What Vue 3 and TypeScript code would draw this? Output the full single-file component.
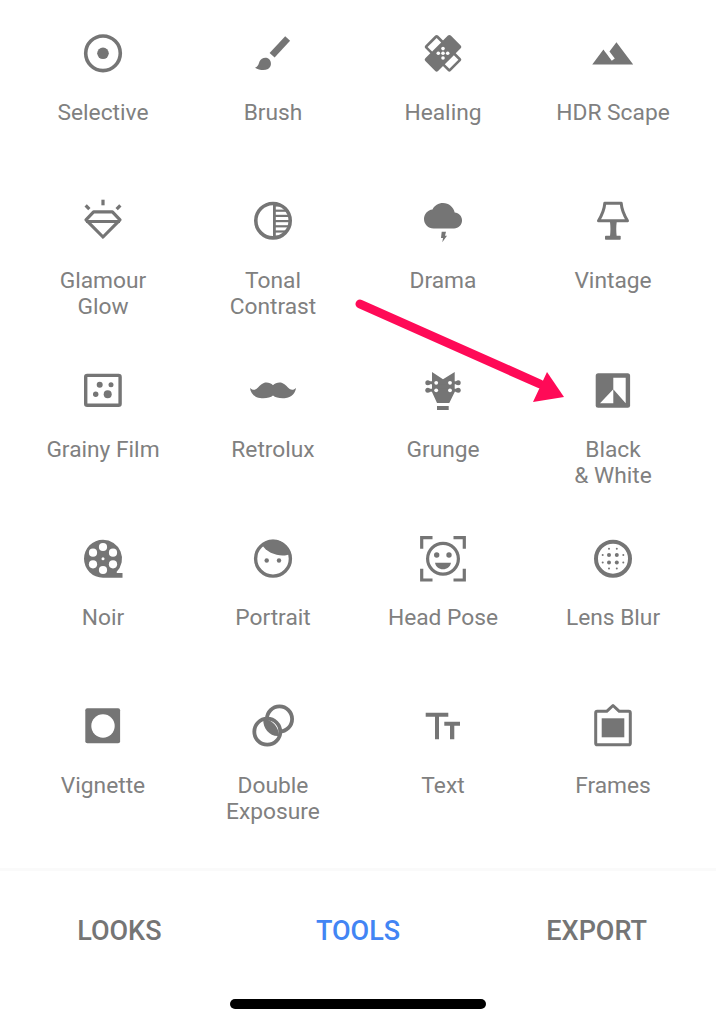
<script setup lang="ts">
// 工具面板 - Snapseed tools grid with the bottom tab bar
const tools: { id: string; label: string }[] = [
  { id: "selective", label: "Selective" },
  { id: "brush", label: "Brush" },
  { id: "healing", label: "Healing" },
  { id: "hdr", label: "HDR Scape" },
  { id: "glamour", label: "Glamour\nGlow" },
  { id: "tonal", label: "Tonal\nContrast" },
  { id: "drama", label: "Drama" },
  { id: "vintage", label: "Vintage" },
  { id: "grainy", label: "Grainy Film" },
  { id: "retrolux", label: "Retrolux" },
  { id: "grunge", label: "Grunge" },
  { id: "bw", label: "Black\n& White" },
  { id: "noir", label: "Noir" },
  { id: "portrait", label: "Portrait" },
  { id: "headpose", label: "Head Pose" },
  { id: "lensblur", label: "Lens Blur" },
  { id: "vignette", label: "Vignette" },
  { id: "double", label: "Double\nExposure" },
  { id: "text", label: "Text" },
  { id: "frames", label: "Frames" },
];

const tabs = ["LOOKS", "TOOLS", "EXPORT"];
const activeTab = "TOOLS";

const reelHoles = [
  [24, 13],
  [34, 18.7],
  [34, 30.3],
  [24, 36],
  [14, 30.3],
  [14, 18.7],
];
const blurBig = [
  [20, 21],
  [27.8, 21],
  [20, 28.6],
  [27.8, 28.6],
];
const blurSmall = [
  [20, 14.7],
  [27.8, 14.7],
  [13.7, 21],
  [34.3, 21],
  [13.7, 28.6],
  [34.3, 28.6],
  [20, 34.6],
  [27.8, 34.6],
];
const toneStripes = [9.6, 14.8, 20, 25.2, 30.4, 35.6];
</script>

<template>
  <div class="screen">
    <main class="tool-grid">
      <div v-for="tool in tools" :key="tool.id" class="tool">
        <svg class="tool-icon" viewBox="0 0 48 48" width="48" height="48">
          <template v-if="tool.id === 'selective'">
            <circle class="ring" cx="24" cy="24.3" r="17.3" stroke-width="3.6" />
            <circle cx="24" cy="24.3" r="5.8" />
          </template>
          <template v-else-if="tool.id === 'brush'">
            <path d="M36.2 7.2l4.9 4.6L25.6 28.6l-5-4.6z" />
            <path d="M6 38.7c3-.7 3.6-3.7 4.500-6.200 1.500-3.600 6.500-5 9.500-2.500 3 3 2.500 8-1 10-4 2-9 1-13-1.300z" />
          </template>
          <template v-else-if="tool.id === 'healing'">
            <g transform="rotate(45 24 24.3)">
              <rect x="6" y="15.300" width="36" height="18" rx="2" />
              <rect x="15" y="6.300" width="18" height="36" rx="2" />
              <rect class="hole" x="8.600" y="17.900" width="6.400" height="12.800" />
              <rect class="hole" x="33" y="17.900" width="6.400" height="12.800" />
            </g>
            <circle class="hole" cx="24" cy="19.600" r="1.800" />
            <circle class="hole" cx="19.300" cy="24.300" r="1.800" />
            <circle class="hole" cx="28.700" cy="24.300" r="1.800" />
            <circle class="hole" cx="24" cy="29" r="1.800" />
            <circle class="hole" cx="24" cy="24.300" r="1.800" />
          </template>
          <template v-else-if="tool.id === 'hdr'">
            <path
              transform="translate(1.4 2) scale(1.86)"
              d="M14 6l-3.75 5 2.85 3.8-1.6 1.2C9.81 13.75 7 10 7 10l-6 8h22L14 6z"
            />
          </template>
          <template v-else-if="tool.id === 'glamour'">
            <rect x="22.400" y="2.700" width="3.200" height="5.600" />
            <path d="M5.500 9.600l2.300-2.300 3.700 3.700-2.300 2.300zM42.500 9.600l-2.300-2.300-3.700 3.700 2.300 2.300z" />
            <path class="ring" stroke-width="3.200" stroke-linejoin="round" d="M14.600 14.800h18.800L41 22.800 24 40 7 22.800z" />
            <path class="ring" stroke-width="3.200" d="M7 24.500h34" />
          </template>
          <template v-else-if="tool.id === 'tonal'">
            <clipPath id="tone-clip">
              <circle cx="24" cy="23.700" r="15.400" />
            </clipPath>
            <circle class="ring" cx="24" cy="23.700" r="17.200" stroke-width="3.600" />
            <path d="M24 5.700a18 18 0 0 1 0 36z" />
            <g clip-path="url(#tone-clip)">
              <rect
                v-for="y in toneStripes"
                :key="y"
                class="hole"
                x="26.800"
                :y="y"
                width="14"
                height="3"
              />
            </g>
          </template>
          <template v-else-if="tool.id === 'drama'">
            <path
              transform="translate(5 -.3) scale(1.585)"
              d="M19.35 10.04C18.67 6.59 15.64 4 12 4 9.11 4 6.6 5.64 5.35 8.04 2.34 8.36 0 10.91 0 14c0 3.31 2.69 6 6 6h13c2.76 0 5-2.24 5-5 0-2.64-2.05-4.78-4.65-4.96z"
            />
            <path d="M22.700 34.700H27l-1 4h2l-4.700 6.600.7-4.300h-2z" />
          </template>
          <template v-else-if="tool.id === 'vintage'">
            <path class="ring" stroke-width="3" stroke-linejoin="round" d="M15.800 6.200h16.400c.5 6.500 2.500 11.500 6.300 17.500H9.500c3.800-6 5.800-11 6.300-17.500z" />
            <path d="M21 25h6.700c-.6 4.500-.6 9 0 14.500H21c.6-5.500.6-10 0-14.500z" />
            <rect x="16" y="38.800" width="15.700" height="3.900" rx=".8" />
          </template>
          <template v-else-if="tool.id === 'grainy'">
            <rect class="ring" x="6.700" y="9.400" width="34.400" height="29.800" rx="1.500" stroke-width="3.400" />
            <circle cx="20.700" cy="18.800" r="3" />
            <circle cx="32" cy="18.800" r="2.500" />
            <circle cx="16.700" cy="28.300" r="2.700" />
            <circle cx="28.700" cy="28.300" r="4" />
          </template>
          <template v-else-if="tool.id === 'retrolux'">
            <path d="M24 19.300c-2.300-2.400-6-3.300-9.200-2.300-3.400 1.100-5 4.200-7.500 6-2 1.300-4.300 1.200-6.300-1.200.3 5 4.300 9.600 10 10.300 5.200.6 10.500-.2 13-2.500 2.500 2.300 7.800 3.100 13 2.500 5.700-.7 9.700-5.300 10-10.300-2 2.400-4.300 2.500-6.300 1.200-2.500-1.800-4.100-4.900-7.500-6-3.200-1-6.900-.1-9.200 2.300z" />
          </template>
          <template v-else-if="tool.id === 'grunge'">
            <path d="M13 6l11 7.300L35.700 6v20l-5.400 11H18l-5-11z" />
            <rect x="18" y="40" width="11.700" height="4" />
            <path d="M8.500 15.300h31v3h-31zM8.500 22.800h31v3h-31z" />
            <circle cx="8.800" cy="16.800" r="2.500" />
            <circle cx="8.800" cy="24.300" r="2.500" />
            <circle cx="39.200" cy="16.800" r="2.500" />
            <circle cx="39.200" cy="24.300" r="2.500" />
            <circle class="hole" cx="17.200" cy="16.800" r="1.900" />
            <circle class="hole" cx="31" cy="16.800" r="1.900" />
            <circle class="hole" cx="17.200" cy="24.300" r="1.900" />
            <circle class="hole" cx="31" cy="24.300" r="1.900" />
          </template>
          <template v-else-if="tool.id === 'bw'">
            <rect x="6.700" y="7.300" width="34.400" height="34.400" rx="2.500" />
            <path class="hole" d="M24.300 11.700h12.400v25.600L24.300 23.300zM11 37.300l13.300-14v14z" />
          </template>
          <template v-else-if="tool.id === 'noir'">
            <path d="M24 5.700a19 19 0 0 1 13.500 32.400l.5.900h5.500v4.700H24a19 19 0 0 1 0-38z" />
            <circle
              v-for="h in reelHoles"
              :key="h.join()"
              class="hole"
              :cx="h[0]"
              :cy="h[1]"
              r="4.100"
            />
            <circle class="hole" cx="24" cy="24.700" r="1.500" />
          </template>
          <template v-else-if="tool.id === 'portrait'">
            <circle class="ring" cx="24" cy="24.700" r="17.400" stroke-width="3.400" />
            <path d="M13 10.500c3.500 7 13 11 20.500 11 3.500 0 6-.6 8.500-1.800C39.500 11.500 32 5.700 24 5.700c-4 0-8 1.800-11 4.800z" />
            <circle cx="17.700" cy="26.500" r="2.200" />
            <circle cx="30" cy="26.500" r="2.200" />
          </template>
          <template v-else-if="tool.id === 'headpose'">
            <path class="ring" stroke-width="3.200" d="M13.500 3.600H2.700v11.200M34.500 3.600h10.800v11.200M13.500 46H2.700V34.800M34.500 46h10.800V34.800" />
            <circle class="ring" cx="24" cy="24.700" r="15.400" stroke-width="3.200" />
            <circle cx="17.700" cy="21" r="2.700" />
            <circle cx="30" cy="21" r="2.700" />
            <path d="M16 28.700h16c-.6 3.800-4 6.600-8 6.600s-7.400-2.800-8-6.600z" />
          </template>
          <template v-else-if="tool.id === 'lensblur'">
            <circle class="ring" cx="24" cy="24.700" r="17" stroke-width="4" />
            <circle v-for="d in blurBig" :key="d.join()" :cx="d[0]" :cy="d[1]" r="2" />
            <circle v-for="d in blurSmall" :key="d.join()" :cx="d[0]" :cy="d[1]" r="1" />
          </template>
          <template v-else-if="tool.id === 'vignette'">
            <rect x="6.300" y="6.300" width="34.800" height="35" rx="2" />
            <circle class="hole" cx="24" cy="24" r="11.700" />
          </template>
          <template v-else-if="tool.id === 'double'">
            <circle class="ring" cx="30.500" cy="17" r="12.600" stroke-width="3.800" />
            <circle class="hole" cx="18.300" cy="29.700" r="14" />
            <circle class="ring" cx="18.300" cy="29.700" r="13" stroke-width="3.800" />
            <path d="M14.300 17.500c8-1 16 7 15.500 16.500-9 .7-16-7.500-15.500-16.500z" />
          </template>
          <template v-else-if="tool.id === 'text'">
            <path d="M6.700 10.700h22.600v4H20v22.600h-4V14.700H6.700z" />
            <path d="M25.300 19.700H41v4h-5.700v13.600H31V23.700h-5.700z" />
          </template>
          <template v-else-if="tool.id === 'frames'">
            <path class="ring" stroke-width="3" stroke-linejoin="round" d="M17.700 9.300L24 3.500l6.300 5.800h9.400c1 0 1.600.6 1.600 1.600v30.300c0 1-.6 1.600-1.600 1.600H8.300c-1 0-1.600-.6-1.600-1.600V10.900c0-1 .6-1.600 1.600-1.600z" />
            <rect x="12.700" y="16.300" width="22.600" height="19" />
          </template>
        </svg>
        <span class="tool-label">{{ tool.label }}</span>
      </div>
    </main>

    <footer class="tabbar">
      <nav class="tabs">
        <span
          v-for="tab in tabs"
          :key="tab"
          class="tab"
          :class="{ active: tab === activeTab }"
        >{{ tab }}</span>
      </nav>
      <div class="home-bar"></div>
    </footer>

    <!-- 标注箭头，压在内容上面 -->
    <svg class="arrow" viewBox="0 0 716 1024" width="716" height="1024">
      <path d="M360 304L540 384" stroke="#ff0a57" stroke-width="9" stroke-linecap="round" fill="none" />
      <path d="M547 372L564 397L533 402z" fill="#ff0a57" />
    </svg>
  </div>
</template>

<style>
html,
body {
  margin: 0;
  background: #fff;
}
</style>

<style scoped>
.screen {
  position: relative;
  width: 716px;
  height: 1024px;
  overflow: hidden;
  display: flex;
  flex-direction: column;
  background: #fff;
  font-family: Roboto, "Liberation Sans", sans-serif;
}

.tool-grid {
  flex: 1;
  min-height: 0;
  display: grid;
  grid-template-columns: repeat(4, 170px);
  grid-auto-rows: 168.25px;
  padding: 29px 18px 0;
}

.tool {
  display: flex;
  flex-direction: column;
  align-items: center;
}

.tool-icon {
  display: block;
  flex-shrink: 0;
  fill: #757575;
}

.tool-icon .ring {
  fill: none;
  stroke: #757575;
}

.tool-icon .hole {
  fill: #fff;
}

.tool-label {
  margin-top: 23px;
  font-size: 22.75px;
  line-height: 26px;
  color: #808080;
  text-align: center;
  white-space: pre-line;
}

.tabbar {
  flex-shrink: 0;
  height: 156px;
  box-sizing: border-box;
  border-top: 3px solid #fafafa;
  display: flex;
  flex-direction: column;
  align-items: center;
}

.tabs {
  width: 100%;
  display: grid;
  grid-template-columns: repeat(3, 1fr);
  margin-top: 44px;
}

.tab {
  text-align: center;
  font-size: 27px;
  line-height: 32px;
  font-weight: 500;
  color: #757575;
}

.tab.active {
  color: #4285f4;
}

.home-bar {
  width: 256px;
  height: 10px;
  margin-top: 52px;
  border-radius: 5px;
  background: #000;
}

.arrow {
  position: absolute;
  inset: 0;
  pointer-events: none;
}
</style>
